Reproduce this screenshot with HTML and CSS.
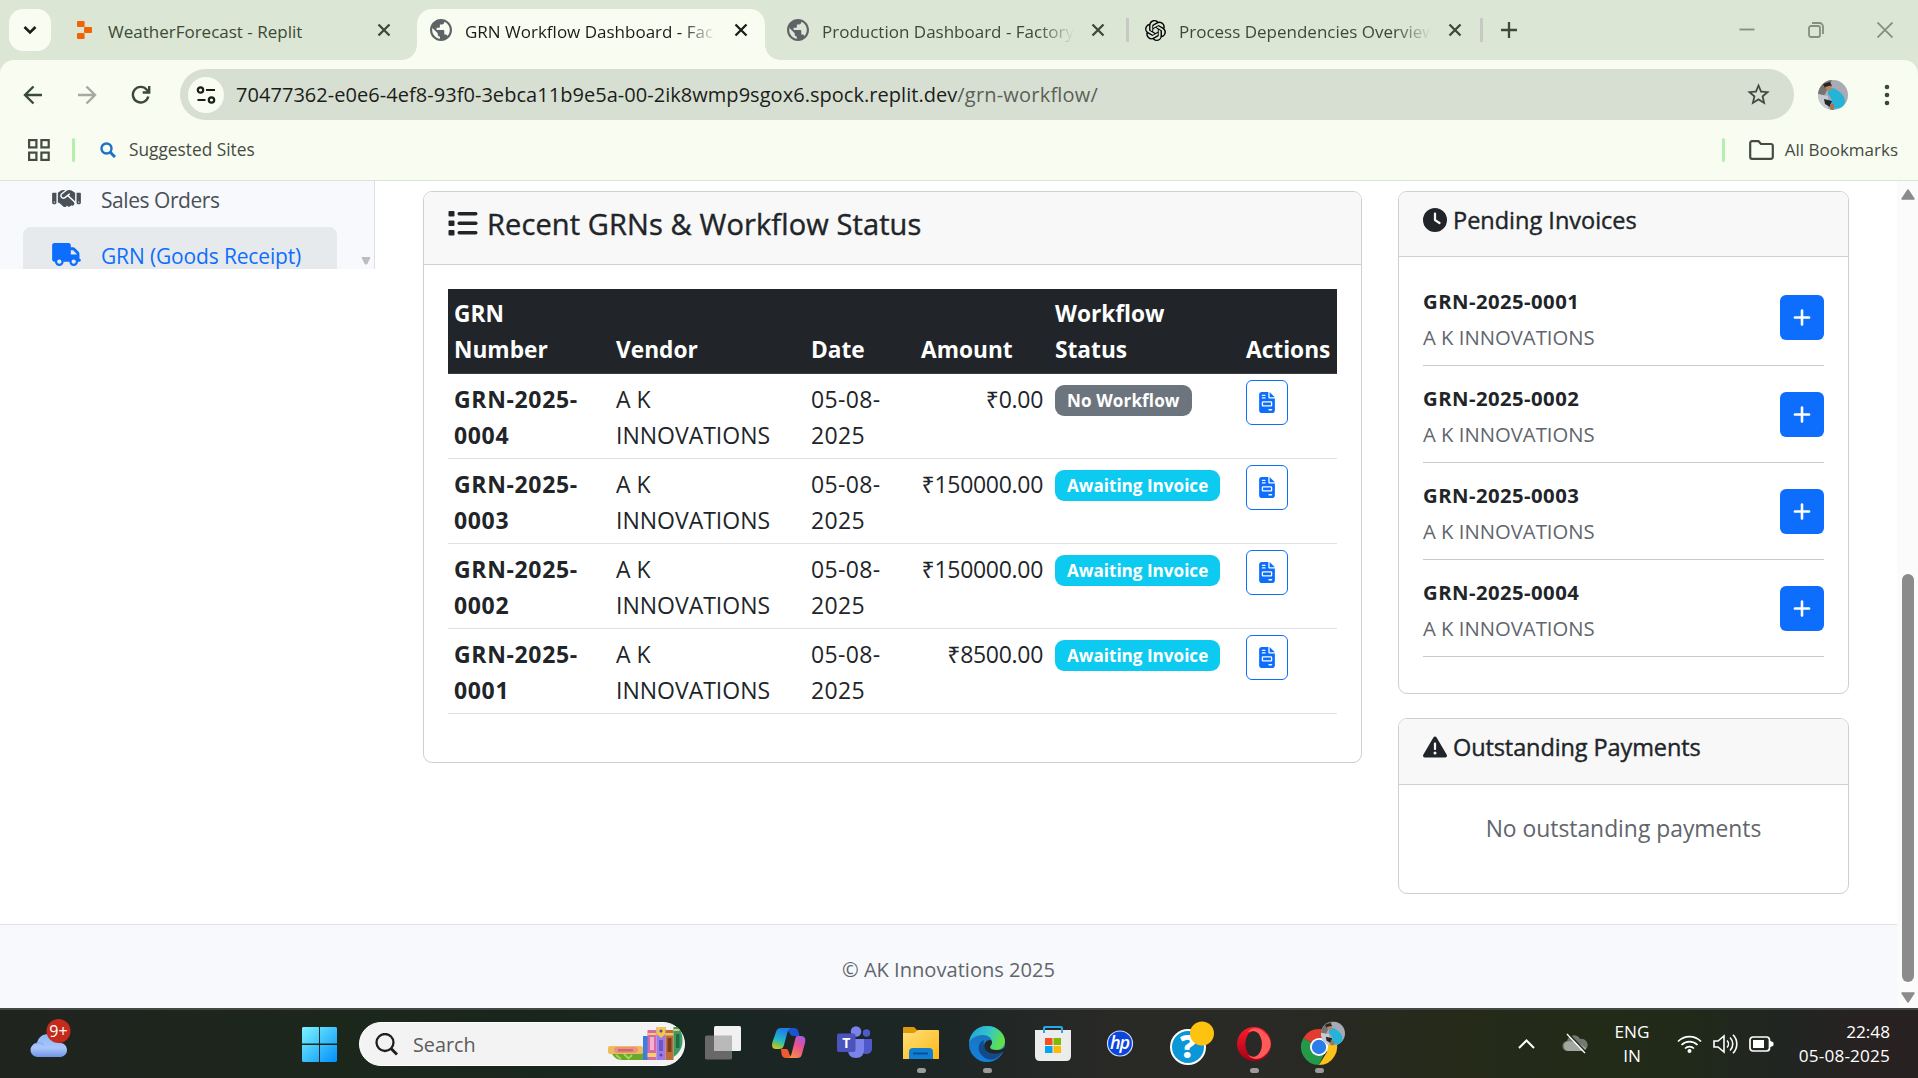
FILE: index.html
```html
<!DOCTYPE html>
<html lang="en">
<head>
<meta charset="utf-8">
<title>GRN Workflow Dashboard - Factory</title>
<link rel="stylesheet" href="styles.css">
</head>
<body>
<svg class="sprite" aria-hidden="true">
  <symbol id="i-globe" viewBox="2 2 20 20"><path d="M12 2C6.48 2 2 6.48 2 12s4.48 10 10 10 10-4.48 10-10S17.52 2 12 2zm-1 17.93c-3.95-.49-7-3.85-7-7.93 0-.62.08-1.21.21-1.79L9 15v1c0 1.1.9 2 2 2v1.93zm6.9-2.54c-.26-.81-1-1.39-1.9-1.39h-1v-3c0-.55-.45-1-1-1H8v-2h2c.55 0 1-.45 1-1V7h2c1.1 0 2-.9 2-2v-.41c2.93 1.19 5 4.06 5 7.41 0 2.08-.8 3.97-2.1 5.39z"/></symbol>
  <symbol id="i-close" viewBox="0 0 14 14"><path d="M1.5 1.5l11 11M12.5 1.5l-11 11" fill="none" stroke="currentColor" stroke-width="2.3"/></symbol>
  <symbol id="i-file" viewBox="0 0 384 512"><path d="M64 0C28.7 0 0 28.7 0 64V448c0 35.3 28.7 64 64 64H320c35.3 0 64-28.7 64-64V160H256c-17.7 0-32-14.3-32-32V0H64zM256 0V128H384L256 0zM80 64h64c8.8 0 16 7.2 16 16s-7.2 16-16 16H80c-8.8 0-16-7.2-16-16s7.2-16 16-16zm0 64h64c8.8 0 16 7.2 16 16s-7.2 16-16 16H80c-8.8 0-16-7.2-16-16s7.2-16 16-16zm16 96H288c17.7 0 32 14.3 32 32v64c0 17.7-14.3 32-32 32H96c-17.7 0-32-14.3-32-32V256c0-17.7 14.3-32 32-32zm0 32v64H288V256H96zM240 416h64c8.8 0 16 7.2 16 16s-7.2 16-16 16H240c-8.8 0-16-7.2-16-16s7.2-16 16-16z"/></symbol>
  <symbol id="i-plus" viewBox="0 0 448 512"><path d="M256 80c0-17.7-14.3-32-32-32s-32 14.3-32 32V224H48c-17.7 0-32 14.3-32 32s14.3 32 32 32H192V432c0 17.7 14.3 32 32 32s32-14.3 32-32V288H400c17.7 0 32-14.3 32-32s-14.3-32-32-32H256V80z"/></symbol>
  <symbol id="i-avatar" viewBox="0 0 30 30">
    <clipPath id="av"><circle cx="15" cy="15" r="15"/></clipPath>
    <g clip-path="url(#av)"><rect width="30" height="30" fill="#a8abb3"/><path d="M0 0h14L6 16 0 14z" fill="#77736f"/><path d="M0 14l10 2v14H0z" fill="#c6cad2"/><path d="M6 19l8 2-2 6-5-3z" fill="#25272c"/><path d="M10 9c3-2 6-1 9 1 5 3 8 7 8 12 0 3-2 5-5 6l-8 1 0-9-4-6z" fill="#25b4d8"/><path d="M5 4l7-2 2 4-7 2z" fill="#2b2522"/><path d="M7 7l6-1.500 1 4.500-4 1z" fill="#b98566"/><path d="M12 24h4v6h-4z" fill="#a3735a"/></g>
  </symbol>
</svg>

<div class="screen">
  <header class="browser">
    <div class="tabstrip">
      <button class="tab-search"><svg width="14" height="10" viewBox="0 0 14 10"><path d="M1.5 2l5.500 5.500L12.500 2" fill="none" stroke="#1b1d19" stroke-width="2.6"/></svg></button>
      <div class="tab tab-first">
        <span class="fav"><svg width="15" height="18" viewBox="0 0 15 18" fill="#f26207"><rect width="7.600" height="6" rx="1"/><rect x="7" y="6" width="8" height="6" rx="1"/><rect y="12" width="7.600" height="6" rx="1"/></svg></span>
        <span class="tab-title">WeatherForecast - Replit</span>
        <svg class="tab-close"><use href="#i-close"/></svg>
      </div>
      <div class="tab tab-active">
        <span class="fav"><svg class="globe"><use href="#i-globe"/></svg></span>
        <span class="tab-title fade">GRN Workflow Dashboard - Fac</span>
        <svg class="tab-close"><use href="#i-close"/></svg>
      </div>
      <div class="tab tab-third">
        <span class="fav"><svg class="globe"><use href="#i-globe"/></svg></span>
        <span class="tab-title fade">Production Dashboard - Factory</span>
        <svg class="tab-close"><use href="#i-close"/></svg>
      </div>
      <div class="tab tab-fourth">
        <span class="fav"><svg width="21" height="21" viewBox="0 0 24 24"><path d="M22.2819 9.8211a5.9847 5.9847 0 0 0-.5157-4.9108 6.0462 6.0462 0 0 0-6.5098-2.9A6.0651 6.0651 0 0 0 4.9807 4.1818a5.9847 5.9847 0 0 0-3.9977 2.9 6.0462 6.0462 0 0 0 .7427 7.0966 5.98 5.98 0 0 0 .511 4.9107 6.051 6.051 0 0 0 6.5146 2.9001A5.9847 5.9847 0 0 0 13.2599 24a6.0557 6.0557 0 0 0 5.7718-4.2058 5.9894 5.9894 0 0 0 3.9977-2.9001 6.0557 6.0557 0 0 0-.7475-7.0729zm-9.022 12.6081a4.4755 4.4755 0 0 1-2.8764-1.0408l.1419-.0804 4.7783-2.7582a.7948.7948 0 0 0 .3927-.6813v-6.7369l2.02 1.1686a.071.071 0 0 1 .038.052v5.5826a4.504 4.504 0 0 1-4.4945 4.4944zm-9.6607-4.1254a4.4708 4.4708 0 0 1-.5346-3.0137l.142.0852 4.783 2.7582a.7712.7712 0 0 0 .7806 0l5.8428-3.3685v2.3324a.0804.0804 0 0 1-.0332.0615L9.74 19.9502a4.4992 4.4992 0 0 1-6.1408-1.6464zM2.3408 7.8956a4.485 4.485 0 0 1 2.3655-1.9728V11.6a.7664.7664 0 0 0 .3879.6765l5.8144 3.3543-2.0201 1.1685a.0757.0757 0 0 1-.071 0l-4.8303-2.7865A4.504 4.504 0 0 1 2.3408 7.872zm16.5963 3.8558L13.1038 8.364 15.1192 7.2a.0757.0757 0 0 1 .071 0l4.8303 2.7913a4.4944 4.4944 0 0 1-.6765 8.1042v-5.6772a.79.79 0 0 0-.407-.667zm2.0107-3.0231l-.142-.0852-4.7735-2.7818a.7759.7759 0 0 0-.7854 0L9.409 9.2297V6.8974a.0662.0662 0 0 1 .0284-.0615l4.8303-2.7866a4.4992 4.4992 0 0 1 6.6802 4.66zM8.3065 12.863l-2.02-1.1638a.0804.0804 0 0 1-.038-.0567V6.0742a4.4992 4.4992 0 0 1 7.3757-3.4537l-.142.0805L8.704 5.459a.7948.7948 0 0 0-.3927.6813zm1.0976-2.3654l2.602-1.4998 2.6069 1.4998v2.9994l-2.5974 1.4997-2.6067-1.4997Z"/></svg></span>
        <span class="tab-title fade">Process Dependencies Overview</span>
        <svg class="tab-close"><use href="#i-close"/></svg>
      </div>
      <svg class="newtab" width="16" height="16" viewBox="0 0 16 16"><path d="M8 0v16M0 8h16" stroke="#3c4a38" stroke-width="2.300"/></svg>
      <div class="winctl">
        <svg width="16" height="16" viewBox="0 0 16 16"><path d="M.5 7.500h15"/></svg>
        <svg width="16" height="16" viewBox="0 0 16 16"><rect x="1" y="4" width="11" height="11" rx="2"/><path d="M4 1h7.500a3.500 3.500 0 0 1 3.500 3.500V12"/></svg>
        <svg width="16" height="16" viewBox="0 0 16 16"><path d="M.5.5l15 15M15.500.5l-15 15"/></svg>
      </div>
    </div>

    <div class="toolbar">
      <svg class="nav" width="20" height="20" viewBox="0 0 20 20"><path d="M19 10H2.500M10.500 1.500L2 10l8.500 8.500" stroke="#3a4a38"/></svg>
      <svg class="nav" width="20" height="20" viewBox="0 0 20 20"><path d="M1 10h16.500M9.500 1.500L18 10l-8.500 8.500" stroke="#a5aaa0"/></svg>
      <svg class="nav" width="20" height="20" viewBox="0 0 20 20"><path d="M17.300 11.500A7.800 7.800 0 1 1 15.800 4.800L18 7M18.200 1v6.500h-6.500" stroke="#3a4a38"/></svg>
      <div class="omnibox">
        <span class="site-info"><svg width="20" height="20" viewBox="0 0 20 20" fill="none" stroke="#1b1d19" stroke-width="2.200"><circle cx="4.500" cy="5" r="2.700"/><path d="M10 5h9M1.500 15h8"/><circle cx="15.500" cy="15" r="2.700"/></svg></span>
        <span class="url">70477362-e0e6-4ef8-93f0-3ebca11b9e5a-00-2ik8wmp9sgox6.spock.replit.dev<span class="path">/grn-workflow/</span></span>
        <svg class="star" width="27" height="27" viewBox="0 0 24 24" fill="#454b42"><path d="M22 9.240l-7.190-.62L12 2 9.190 8.630 2 9.240l5.460 4.730L5.820 21 12 17.270 18.180 21l-1.630-7.030L22 9.240zM12 15.400l-3.760 2.270 1-4.280-3.320-2.880 4.380-.38L12 6.100l1.710 4.040 4.380.38-3.320 2.880 1 4.280L12 15.400z"/></svg>
      </div>
      <svg class="profile" width="30" height="30"><use href="#i-avatar"/></svg>
      <svg class="menu" width="6" height="22" viewBox="0 0 6 22" fill="#3a4a38"><circle cx="3" cy="3" r="2.300"/><circle cx="3" cy="11" r="2.300"/><circle cx="3" cy="19" r="2.300"/></svg>
    </div>

    <div class="bookmarks">
      <svg class="apps" width="22" height="22" viewBox="0 0 22 22" fill="none" stroke="#454b42" stroke-width="2.200"><rect x="1.100" y="1.100" width="7.300" height="7.300"/><rect x="13.400" y="1.100" width="7.300" height="7.300"/><rect x="1.100" y="13.600" width="7.300" height="7.300"/><rect x="13.400" y="13.600" width="7.300" height="7.300"/></svg>
      <i class="bm-sep"></i>
      <svg class="bm-search" width="16" height="16" viewBox="0 0 16 16" fill="none" stroke="#1b73c8"><circle cx="6.500" cy="6.500" r="5" stroke-width="2.400"/><path d="M10 10l5 5" stroke-width="3"/></svg>
      <span class="bm-text suggested">Suggested Sites</span>
      <i class="bm-sep bm-right"></i>
      <svg class="folder" width="25" height="20" viewBox="0 0 25 20"><path d="M3 1.200h6.500l2.500 2.800h10a1.800 1.800 0 0 1 1.800 1.800V17a1.800 1.800 0 0 1-1.800 1.800H3A1.800 1.800 0 0 1 1.200 17V3A1.800 1.800 0 0 1 3 1.200z" fill="none" stroke="#454b42" stroke-width="2.200"/></svg>
      <span class="bm-text allbm">All Bookmarks</span>
    </div>
  </header>

  <div class="viewport">
    <div class="page">
      <div class="content">
        <aside class="sidebar">
          <nav>
            <a class="side-link"><svg width="29" height="23" viewBox="0 0 640 512"><path d="M323.400 85.200l-96.800 78.400c-16.100 13-19.200 36.400-7 53.100c12.900 17.800 38 21.300 55.300 7.800l99.300-77.200c7-5.400 17-4.200 22.500 2.800s4.200 17-2.800 22.500l-20.900 16.200L512 316.800V128h-.7l-3.900-2.500L434.800 79c-15.300-9.800-33.200-15-51.400-15c-21.800 0-43 7.500-60 21.200zm22.800 124.400l-51.700 40.200C263 274.300 217.300 268 193.700 235.600c-22.200-30.500-16.600-73.100 12.700-96.800l83.200-67.300c-11.600-4.900-24.100-7.400-36.800-7.400C234 64 215.700 69.600 200 80l-72 48V352h28.200l91.400 83.400c19.600 17.900 49.900 16.500 67.800-3.100c5.500-6.100 9.200-13.200 11.100-20.600l17 15.600c19.500 17.900 49.900 16.600 67.800-2.900c4.500-4.900 7.800-10.600 9.900-16.500c19.400 13 45.800 10.300 62.100-7.500c17.900-19.500 16.600-49.900-2.900-67.800l-134.200-123zM16 128c-8.800 0-16 7.200-16 16V352c0 17.700 14.300 32 32 32H64c17.700 0 32-14.300 32-32V128H16zM48 320a16 16 0 1 1 0 32 16 16 0 1 1 0-32zM544 128V352c0 17.700 14.300 32 32 32h32c17.700 0 32-14.300 32-32V144c0-8.800-7.200-16-16-16H544zm32 208a16 16 0 1 1 32 0 16 16 0 1 1 -32 0z"/></svg><span class="t-sales">Sales Orders</span></a>
            <a class="side-link active"><svg width="29" height="23" viewBox="0 0 640 512"><path d="M48 0C21.500 0 0 21.500 0 48V368c0 26.500 21.500 48 48 48H64c0 53 43 96 96 96s96-43 96-96H384c0 53 43 96 96 96s96-43 96-96h32c17.700 0 32-14.300 32-32s-14.300-32-32-32V288 256 237.300c0-17-6.700-33.300-18.700-45.300L512 114.700c-12-12-28.300-18.700-45.300-18.700H416V48c0-26.500-21.500-48-48-48H48zM416 160h50.700L544 237.300V256H416V160zM112 416a48 48 0 1 1 96 0 48 48 0 1 1 -96 0zm368-48a48 48 0 1 1 0 96 48 48 0 1 1 0-96z"/></svg><span class="t-grn">GRN (Goods Receipt)</span></a>
          </nav>
          <svg class="side-arrow" width="10" height="8" viewBox="0 0 10 8"><path d="M1 .5h8L5.800 7H4.200z" fill="#bdbdbd" stroke="#bdbdbd"/></svg>
        </aside>

        <main class="card recent">
          <div class="card-head big">
            <svg width="30" height="25" viewBox="0 0 30 25"><rect x=".5" y="0" width="6" height="5.500" rx="1"/><rect x=".5" y="9.500" width="6" height="5.500" rx="1"/><rect x=".5" y="19" width="6" height="5.500" rx="1"/><rect x="9.500" y="1" width="20" height="3.500" rx="1.700"/><rect x="9.500" y="10.500" width="20" height="3.500" rx="1.700"/><rect x="9.500" y="20" width="20" height="3.500" rx="1.700"/></svg>
            <h5>Recent GRNs &amp; Workflow Status</h5>
          </div>
          <div class="card-body">
            <table>
              <colgroup><col class="c1"><col class="c2"><col class="c3"><col class="c4"><col class="c5"><col class="c6"></colgroup>
              <thead><tr><th>GRN<br>Number</th><th>Vendor</th><th>Date</th><th>Amount</th><th>Workflow<br>Status</th><th>Actions</th></tr></thead>
              <tbody>
                <tr><td><strong>GRN-2025-<br>0004</strong></td><td>A K<br>INNOVATIONS</td><td class="date">05-08-<br>2025</td><td class="num">₹0.00</td><td><span class="badge none">No Workflow</span></td><td><a class="btn outline"><svg><use href="#i-file"/></svg></a></td></tr>
                <tr><td><strong>GRN-2025-<br>0003</strong></td><td>A K<br>INNOVATIONS</td><td class="date">05-08-<br>2025</td><td class="num">₹150000.00</td><td><span class="badge wait">Awaiting Invoice</span></td><td><a class="btn outline"><svg><use href="#i-file"/></svg></a></td></tr>
                <tr><td><strong>GRN-2025-<br>0002</strong></td><td>A K<br>INNOVATIONS</td><td class="date">05-08-<br>2025</td><td class="num">₹150000.00</td><td><span class="badge wait">Awaiting Invoice</span></td><td><a class="btn outline"><svg><use href="#i-file"/></svg></a></td></tr>
                <tr><td><strong>GRN-2025-<br>0001</strong></td><td>A K<br>INNOVATIONS</td><td class="date">05-08-<br>2025</td><td class="num">₹8500.00</td><td><span class="badge wait">Awaiting Invoice</span></td><td><a class="btn outline"><svg><use href="#i-file"/></svg></a></td></tr>
              </tbody>
            </table>
          </div>
        </main>

        <section class="side-cards">
          <div class="card pending">
            <div class="card-head">
              <svg width="24" height="24" viewBox="0 0 512 512"><path d="M256 0a256 256 0 1 1 0 512A256 256 0 1 1 256 0zM232 120V256c0 8 4 15.500 10.700 20l96 64c11 7.400 25.900 4.400 33.300-6.700s4.400-25.900-6.700-33.300L280 243.200V120c0-13.300-10.700-24-24-24s-24 10.700-24 24z"/></svg>
              <h6 class="t-pend">Pending Invoices</h6>
            </div>
            <ul class="invoices">
              <li><div><strong>GRN-2025-0001</strong><small>A K INNOVATIONS</small></div><a class="btn solid"><svg><use href="#i-plus"/></svg></a></li>
              <li><div><strong>GRN-2025-0002</strong><small>A K INNOVATIONS</small></div><a class="btn solid"><svg><use href="#i-plus"/></svg></a></li>
              <li><div><strong>GRN-2025-0003</strong><small>A K INNOVATIONS</small></div><a class="btn solid"><svg><use href="#i-plus"/></svg></a></li>
              <li><div><strong>GRN-2025-0004</strong><small>A K INNOVATIONS</small></div><a class="btn solid"><svg><use href="#i-plus"/></svg></a></li>
            </ul>
          </div>
          <div class="card payments">
            <div class="card-head">
              <svg width="24" height="24" viewBox="0 0 512 512"><path d="M256 32c14.200 0 27.300 7.500 34.500 19.800l216 368c7.300 12.400 7.300 27.700 .2 40.100S486.300 480 472 480H40c-14.300 0-27.600-7.700-34.700-20.100s-7-27.800 .2-40.100l216-368C228.700 39.500 241.800 32 256 32zm0 128c-13.300 0-24 10.700-24 24V296c0 13.300 10.700 24 24 24s24-10.700 24-24V184c0-13.300-10.700-24-24-24zm32 224a32 32 0 1 0-64 0 32 32 0 1 0 64 0z"/></svg>
              <h6 class="t-out">Outstanding Payments</h6>
            </div>
            <p class="empty">No outstanding payments</p>
          </div>
        </section>
      </div>
      <footer class="footer"><span>© AK Innovations 2025</span></footer>
    </div>
    <div class="scrollbar">
      <svg width="14" height="11" viewBox="0 0 14 11"><path d="M7 1L13 10H1z" fill="#8b8b8b" stroke="#8b8b8b" stroke-width="1.500" stroke-linejoin="round"/></svg>
      <i class="thumb"></i>
      <svg width="14" height="11" viewBox="0 0 14 11"><path d="M7 10L13 1H1z" fill="#8b8b8b" stroke="#8b8b8b" stroke-width="1.500" stroke-linejoin="round"/></svg>
    </div>
  </div>

  <div class="taskbar">
    <svg class="weather" width="44" height="44" viewBox="0 0 44 44">
      <defs><linearGradient id="cl" x1="0" y1="0" x2="0" y2="1"><stop offset="0" stop-color="#8fb4f3"/><stop offset=".6" stop-color="#a9c6fa"/><stop offset="1" stop-color="#6f95e6"/></linearGradient></defs>
      <path d="M9 38a7 7 0 0 1-1-14c1-5 5-9 11-9 6 0 10 4 11 9a7 7 0 0 1 2 14z" fill="url(#cl)"/><path d="M4 26c4-3 8-3 11 0" fill="none" stroke="#7fa3ec"/>
      <circle cx="29.500" cy="12" r="12" fill="#c42b1c"/><text x="29.500" y="18" text-anchor="middle" class="badge-num">9+</text>
    </svg>
    <svg class="start" width="35" height="35" viewBox="0 0 35 35"><defs><linearGradient id="win" gradientUnits="userSpaceOnUse" x1="0" y1="0" x2="35" y2="35"><stop offset="0" stop-color="#7df4ff"/><stop offset="1" stop-color="#0090fa"/></linearGradient></defs><path d="M1 0h16v16.500H0V1zM18 0h16l1 1v15.500H18zM0 18h17v17H1l-1-1zM18 18h17v16l-1 1H18z" fill="url(#win)"/></svg>
    <div class="searchbox">
      <svg width="23" height="23" viewBox="0 0 23 23" fill="none" stroke="#1f1f1f" stroke-width="2.300"><circle cx="10" cy="9.500" r="8.500"/><path d="M16 15.500l6 6" stroke-width="3"/></svg>
      <span>Search</span>
      <svg class="books" width="76" height="34" viewBox="0 0 76 34">
        <path d="M4 26h32v7H14c-5 0-8-3-10-6z" fill="#6aa82c"/><path d="M8 28l5 4M16 27l5 5M24 28l-4 4" stroke="#a4d64e" stroke-width="2"/>
        <rect x="0" y="19" width="35" height="8" rx="2" fill="#eebc5e"/><rect x="6" y="20" width="24" height="6" rx="3" fill="#ee8f86"/><rect x="10" y="22" width="15" height="2.500" fill="#c96b64"/>
        <rect x="35" y="9" width="5" height="24" fill="#3b7de0"/><rect x="39.500" y="3" width="9" height="30" fill="#d76aa5"/><rect x="39.500" y="6" width="9" height="2" fill="#f4d06a"/><rect x="39.500" y="26" width="9" height="4" fill="#f4d06a"/><rect x="42" y="10" width="4" height="13" fill="#f2b1d2"/>
        <rect x="48.500" y="0" width="9" height="33" fill="#9a7be8"/><path d="M48.500 0h9v7L53 11l-4.500-4z" fill="#f1c64b"/><circle cx="53" cy="4" r="1.500" fill="#5c48ad"/><rect x="51" y="13" width="4" height="11" fill="#6e56c2"/><circle cx="53" cy="28" r="1.600" fill="#5c48ad"/>
        <rect x="57.500" y="3" width="8" height="30" fill="#c26a33"/><rect x="57.500" y="6" width="8" height="2.500" fill="#f0c46a"/><rect x="59.500" y="11" width="4" height="14" fill="#7d3d1c"/>
        <path d="M65.500 0h4c4 4 5 8 5 14s-3 12-9 16z" fill="#3d9a63"/><path d="M65.500 3h6" stroke="#f0c46a" stroke-width="2"/><rect x="68" y="7" width="3.500" height="14" fill="#246b42"/>
      </svg>
    </div>
    <div class="apps-row">
      <span class="app"><svg width="36" height="36" viewBox="0 0 36 36"><rect x="0" y="9.500" width="27" height="24" rx="1.500" fill="#686868"/><rect x="9" y="0" width="27" height="25" rx="1.500" fill="#f1f1f1"/><path d="M9 9.500h18V25H9z" fill="#b9b9b9"/></svg></span>
      <span class="app"><svg width="36" height="36" viewBox="0 0 36 36"><defs><linearGradient id="ca" x1=".3" y1="0" x2="0" y2="1"><stop offset="0" stop-color="#1d7fe8"/><stop offset=".5" stop-color="#21b8c8"/><stop offset=".75" stop-color="#7cc653"/><stop offset="1" stop-color="#f5c518"/></linearGradient><linearGradient id="cb" x1="1" y1="0" x2=".4" y2="1"><stop offset="0" stop-color="#9a5cf5"/><stop offset=".5" stop-color="#e9508f"/><stop offset="1" stop-color="#f88a4a"/></linearGradient></defs>
        <path d="M15 2h8c2.500 0 4 1.500 4.500 4l1 4h-6c-2 0-3-1-4-3z" fill="#1b54d2"/><path d="M10 23l5 0c2 0 2 1 3 4s2 5 5 5H15c-3 0-4-2-4.500-4z" fill="#f2592f"/>
        <path d="M10 2h11c-3 0-4 2-5 6l-3 11c-1 3-2 4-5 4H5c-4 0-4.500-3-3.500-7L5 6c1-3 2-4 5-4z" fill="url(#ca)"/><path d="M26 10h4c4 0 5 3 4 7l-3 11c-1 3-2 4-5 4H16c3 0 4-2 5-6l3-12c.5-2 .5-3 2-4z" fill="url(#cb)"/></svg></span>
      <span class="app"><svg width="36" height="36" viewBox="0 0 36 36"><circle cx="29.500" cy="7" r="3.700" fill="#5059c9"/><path d="M25 13h10v10c0 3-3 5-6 5s-4-2-4-4z" fill="#5059c9"/><circle cx="19" cy="5.500" r="5.300" fill="#7b83eb"/><path d="M11 13h16v11c0 5-3 8-8 8s-8-3-8-8z" fill="#7b83eb"/><rect x="0" y="7.500" width="18.500" height="18.500" rx="2" fill="#4b53bc"/><text x="9.200" y="21.500" text-anchor="middle" class="teams-t">T</text></svg></span>
      <span class="app run"><svg width="36" height="36" viewBox="0 0 36 36"><defs><linearGradient id="fo" x1="0" y1="0" x2="1" y2="1"><stop offset="0" stop-color="#ffe07a"/><stop offset="1" stop-color="#fcb814"/></linearGradient></defs><path d="M0 2q0-1 1-1h10l4 4v6H0z" fill="#dc9a0b"/><path d="M0 7h11l4-3h20q1 0 1 1v28H0z" fill="url(#fo)"/><path d="M6 33v-7q0-4 4-4h16q4 0 4 4v7z" fill="#0f7fd4"/><path d="M10 27.500h15" stroke="#0b4e8f" stroke-width="2"/></svg></span>
      <span class="app run"><svg width="36" height="36" viewBox="0 0 36 36"><defs><linearGradient id="ea" x1="0" y1="0" x2="1" y2=".3"><stop offset="0" stop-color="#1e9de0"/><stop offset=".6" stop-color="#34c7c5"/><stop offset="1" stop-color="#62e04a"/></linearGradient><linearGradient id="eb" x1="0" y1="0" x2="0" y2="1"><stop offset="0" stop-color="#1c6fb5"/><stop offset="1" stop-color="#1283e0"/></linearGradient></defs><circle cx="18" cy="18" r="18" fill="url(#eb)"/><path d="M0 17C1 7 8 0 18 0c11 0 18 8 18 15 0 6-4 9-9 9-4 0-6-1-6-3 0-1 2-2 2-5 0-4-4-7-9-7C8 9 2 12 0 17z" fill="url(#ea)"/><path d="M15 14c-5 2-7 8-4 13s11 10 18 4c2-2 4-3 4.500-4.500-5 2-15 1-18-5-1.200-3-1-5-.5-7.500z" fill="#134a8c"/><path d="M20 14c-4 1-6 5-4 9 3 5 11 6 17 3.500 1-.5 1.500-.5 1 .8L36 24v-3c-3 3-6 3-9 3-4 0-6-1-6-3 0-1 2-2 2-5 0-1-1-2.500-3-2z" fill="#222725"/></svg></span>
      <span class="app"><svg width="36" height="36" viewBox="0 0 36 36"><path d="M9 7V2.500Q9 1 10.500 1h15Q27 1 27 2.500V7" fill="none" stroke="#27a7ea" stroke-width="2.200"/><path d="M0 4h36v26q0 5-5 5H5q-5 0-5-5z" fill="#ececec"/><path d="M9 4v3M27 4v3" stroke="#27a7ea" stroke-width="2"/><path d="M10 12h7.500v7H10z" fill="#f25022"/><path d="M18.500 12H26v7h-7.500z" fill="#7fba00"/><path d="M10 20h7.500v7H10z" fill="#00a4ef"/><path d="M18.500 20H26v7h-7.500z" fill="#ffb900"/></svg></span>
      <span class="app hp"><svg width="36" height="36" viewBox="0 0 36 36"><circle cx="18" cy="17.500" r="12.500" fill="#0b45e0" stroke="#d5dcf5" stroke-width="1.200"/><text x="17.500" y="22.500" text-anchor="middle" class="hp-t">hp</text></svg></span>
      <span class="app help"><svg width="52" height="46" viewBox="0 0 52 46"><circle cx="26" cy="26" r="17" fill="#0a96d7" stroke="#fff" stroke-width="2"/><text x="26" y="37" text-anchor="middle" class="help-t">?</text><circle cx="40" cy="12.500" r="12" fill="#ffc20e"/></svg></span>
      <span class="app run"><svg width="36" height="36" viewBox="0 0 36 36"><defs><linearGradient id="op" x1="0" y1="0" x2="0" y2="1"><stop offset="0" stop-color="#ff1b2d"/><stop offset="1" stop-color="#a70014"/></linearGradient></defs><circle cx="18" cy="18" r="17" fill="url(#op)"/><path d="M12 6c4-6 12-4 16 0 9 7 9 17 0 24-5 4-12 4-16-1 8 4 14-2 14-11S20 3 12 6z" fill="#ff5a5a"/><ellipse cx="17.500" cy="18" rx="8.200" ry="12.800" fill="#292927"/></svg></span>
      <span class="app run chrome"><svg width="52" height="46" viewBox="0 0 52 46"><path d="M26 26L10.400 17A18 18 0 0 1 41.600 17z" fill="#e33b2e"/><path d="M10.400 17L26 26l6 5-6 13A18 18 0 0 1 10.400 17z" fill="#24994a"/><path d="M26 17h15.600A18 18 0 0 1 26 44l8-13z" fill="#fcc31b"/><circle cx="26" cy="26" r="9" fill="#fff"/><circle cx="26" cy="26" r="7.200" fill="#2b7de9"/><svg x="28" y="0" width="24" height="25" viewBox="0 0 30 30"><use href="#i-avatar"/></svg></svg></span>
    </div>
    <div class="tray">
      <svg class="chev" width="17" height="10" viewBox="0 0 17 10"><path d="M1 9l7.500-7.500L16 9" fill="none" stroke="#fff" stroke-width="2"/></svg>
      <svg class="drive" width="26" height="22" viewBox="0 0 26 22"><path d="M6 18a5 5 0 0 1-1-10 7 7 0 0 1 13-2 6 6 0 0 1 3 12z" fill="#747871"/><path d="M4 9c6-2 12 1 20 6-1 2-2 3-4 3H6a5 5 0 0 1-2-9z" fill="#a3a6a1"/><path d="M5 1l18 19" stroke="#fff" stroke-width="1.500"/><path d="M7 1l18 19" stroke="#232a1a" stroke-width="1.200"/></svg>
      <div class="lang"><span>ENG</span><span>IN</span></div>
      <svg class="wifi" width="25" height="20" viewBox="0 0 25 20" fill="none" stroke="#fff" stroke-width="1.700"><path d="M1 7.500a16 16 0 0 1 23 0M4.500 11a11.300 11.300 0 0 1 16 0M8 14.500a6.400 6.400 0 0 1 9 0"/><circle cx="12.500" cy="17" r="2" fill="#fff" stroke="none"/></svg>
      <svg class="sound" width="25" height="20" viewBox="0 0 25 20" fill="none" stroke="#fff" stroke-width="1.600"><path d="M1 7v6h4l6 5V2L5 7z"/><path d="M14 6.500a5 5 0 0 1 0 7M17 3.500a9 9 0 0 1 0 13M20 .8a13 13 0 0 1 0 18.400"/></svg>
      <svg class="batt" width="25" height="16" viewBox="0 0 25 16"><rect x="1" y="1" width="19.500" height="14" rx="3" fill="none" stroke="#fff" stroke-width="1.700"/><rect x="4" y="4" width="11" height="8" fill="#fff"/><path d="M21 5.500l3 1v3l-3 1z" fill="#fff" stroke="#fff"/></svg>
      <div class="clock"><span class="t-time">22:48</span><span class="t-date">05-08-2025</span></div>
    </div>
  </div>
</div>
</body>
</html>
```
FILE: styles.css
```css
* { box-sizing: border-box; }
body { margin: 0; font-family: "Open Sans", "Noto Sans", sans-serif; color: #212529; overflow: hidden; }
svg { flex: none; display: block; }
.sprite { position: absolute; width: 0; height: 0; }
.screen { width: 1918px; height: 1078px; display: flex; flex-direction: column; background: #fff; }

/* browser chrome */
.browser { flex: none; background: #dbe6d4; }
.tabstrip { height: 60px; display: flex; align-items: center; padding-left: 9px; }
.tab-search { width: 42px; height: 42px; border: 0; border-radius: 14px; background: #f8fcf1; padding: 0; display: grid; place-items: center; }
.tab { height: 51px; margin-top: 9px; padding-bottom: 9px; display: flex; align-items: center; color: #3c4a38; flex: none; }
.tab-first { width: 366px; padding-left: 22px; padding-right: 26px; }
.tab-active { width: 348px; padding-left: 13px; padding-right: 17px; background: #f8fcf1; color: #1b1d19; border-radius: 15px 15px 0 0; position: relative; }
.tab-active::before, .tab-active::after { content: ""; position: absolute; bottom: 0; width: 15px; height: 15px; }
.tab-active::before { left: -15px; background: radial-gradient(circle at 0 0, transparent 14.500px, #f8fcf1 15px); }
.tab-active::after { right: -15px; background: radial-gradient(circle at 100% 0, transparent 14.500px, #f8fcf1 15px); }
.tab-third { width: 361px; padding-left: 22px; padding-right: 21px; }
.tab-fourth { width: 357px; padding-left: 18px; padding-right: 21px; background: linear-gradient(#c8c9c2, #c8c9c2) 0 9px / 3px 24px no-repeat, linear-gradient(#c8c9c2, #c8c9c2) 100% 9px / 3px 24px no-repeat; }
.fav { width: 22px; display: grid; place-items: center; margin-right: 13px; flex: none; }
.globe { width: 22px; height: 22px; fill: #5f6368; }
.tab-title { flex: 1; white-space: nowrap; overflow: hidden; font-size: 17px; line-height: 26px; margin-right: 15px; padding-top: 4px; }
.fade { -webkit-mask-image: linear-gradient(90deg, #000 calc(100% - 38px), transparent calc(100% - 2px)); mask-image: linear-gradient(90deg, #000 calc(100% - 38px), transparent calc(100% - 2px)); }
.tab-close { width: 14px; height: 14px; }
.newtab { margin-left: 18px; }
.winctl { margin-left: auto; display: flex; gap: 53px; padding-right: 25px; fill: none; stroke: #84907f; stroke-width: 1.800; }

.toolbar { height: 60px; background: #f8fcf1; border-radius: 14px 14px 0 0; padding-top: 9px; display: flex; align-items: center; padding-left: 23px; }
.nav { margin-right: 34px; fill: none; stroke-width: 2.400; }
.nav + .nav + .nav { margin-right: 29px; }
.omnibox { width: 1614px; height: 51px; border-radius: 26px; background: #d7dfd3; display: flex; align-items: center; padding: 0 22px 0 8px; }
.site-info { width: 36px; height: 36px; border-radius: 50%; background: #f8fcf1; display: grid; place-items: center; margin-right: 12px; }
.url { flex: 1; font-size: 20px; letter-spacing: .04px; color: #1b1d19; white-space: nowrap; }
.path { color: #5a6156; letter-spacing: .2px; }
.profile { margin-left: 24px; }
.menu { margin-left: 36px; }
.bookmarks { height: 61px; background: #f8fcf1; border-bottom: 1px solid #dbe6d4; display: flex; align-items: center; padding-left: 28px; color: #454b42; font-size: 17px; }
.bm-sep { width: 3px; height: 24px; border-radius: 2px; background: #b4f0ac; margin: 0 25px 0 22px; }
.bm-search { margin-right: 13px; }
.bm-text { padding-bottom: 2px; }
.suggested { font-size: 17.300px; }
.bm-right { margin: 0 24px 0 auto; }
.folder { margin-right: 11px; }
.allbm { margin-right: 20px; }

/* page */
.viewport { flex: 1; min-height: 0; display: flex; }
.page { flex: 1; display: flex; flex-direction: column; }
.content { flex: 1; display: flex; align-items: flex-start; }
.sidebar { width: 375px; height: 88px; background: #f8f9fc; border-right: 1px solid #dee2e6; overflow: hidden; display: flex; align-items: flex-end; }
.sidebar nav { width: 337px; height: 88px; padding-left: 23px; }
.side-link { height: 55px; margin-bottom: 1px; padding-left: 29px; display: flex; align-items: center; font-size: 21px; color: #495057; border-radius: 8px; }
.side-link:first-child { margin-top: -10px; }
.side-link svg { fill: currentColor; margin-right: 20px; }
.side-link span { padding-top: 2px; }
.t-sales { letter-spacing: -.45px; }
.t-grn { letter-spacing: -.15px; }
.side-link.active { background: #e7eaed; color: #0d6efd; }
.side-arrow { margin: 0 0 4px 24px; }

.card { background: #fff; border: 1px solid #cdcfd1; border-radius: 9px; overflow: hidden; }
.card-head { background: #f8f8f8; border-bottom: 1px solid #cdcfd1; height: 65px; padding: 0 24px 9px; display: flex; align-items: center; }
.card-head svg { fill: #212529; margin-right: 6px; }
.card-head.big { height: 73px; padding: 0 24px 10px; }
.card-head.big svg { margin-right: 9px; }
h5, h6 { margin: 0; font-weight: 500; white-space: nowrap; -webkit-text-stroke: .4px #212529; }
h5 { font-size: 29px; letter-spacing: .12px; }
h6 { font-size: 23.500px; }
.t-out { letter-spacing: -.1px; }
.recent { width: 939px; height: 572px; margin: 10px 0 0 48px; }
.card-body { padding: 24px; }
table { width: 889px; table-layout: fixed; border-collapse: separate; border-spacing: 0; font-size: 23px; line-height: 36px; white-space: nowrap; }
.c1 { width: 162px; } .c2 { width: 195px; } .c3 { width: 110px; } .c4 { width: 134px; } .c5 { width: 191px; } .c6 { width: 97px; }
th, td { padding: 7px 6px 5px; text-align: left; vertical-align: top; border-bottom: 1px solid #dee2e6; height: 85px; }
th { background: #212529; color: #fff; vertical-align: bottom; border-color: #373b3e; font-size: 22.700px; }
td strong { letter-spacing: .65px; }
.date { letter-spacing: .35px; }
.num { text-align: right; letter-spacing: -.3px; }
.badge { display: block; width: max-content; margin-top: 4px; height: 31px; line-height: 31px; border-radius: 9px; padding: 0 12px; color: #fff; font-weight: 700; font-size: 17.100px; }
.none { background: #6c757d; letter-spacing: .1px; }
.wait { background: #0dcaf0; }
.btn { display: grid; place-items: center; border-radius: 6px; height: 45px; }
.outline { width: 42px; margin-top: -1px; border: 1px solid #0d6efd; fill: #0d6efd; }
.outline svg { width: 16px; height: 21px; }
.solid { width: 44px; background: #0d6efd; fill: #fff; }
.solid svg { width: 18px; height: 21px; }

.side-cards { width: 451px; margin: 10px 0 0 36px; display: flex; flex-direction: column; gap: 24px; }
.pending { height: 503px; }
.invoices { list-style: none; margin: 0; padding: 12px 24px; }
.invoices li { height: 97px; border-bottom: 1px solid #c8cacc; display: flex; justify-content: space-between; align-items: center; }
.invoices div { display: flex; flex-direction: column; padding-top: 4px; }
.invoices strong, .invoices small { font-size: 20.300px; line-height: 36px; white-space: nowrap; }
.invoices strong { letter-spacing: .45px; }
.invoices small { color: #5f666c; }
.payments { height: 176px; }
.payments .card-head { height: 66px; }
.empty { margin: 26px 0 0; text-align: center; font-size: 22.850px; line-height: 36px; color: #5f666c; }
.footer { height: 84px; flex: none; border-top: 1px solid #dee2e6; background: #f8f9fc; display: flex; align-items: center; justify-content: center; padding-top: 5px; font-size: 20.100px; color: #5f666c; }
.scrollbar { width: 21px; background: #fbfbfb; display: flex; flex-direction: column; align-items: center; padding: 8px 0 5px; }
.thumb { width: 12px; height: 408px; border-radius: 6px; background: #8b8b8b; margin: auto 0 10px; }

/* taskbar */
.taskbar { flex: none; height: 70px; border-top: 2px solid #454845; display: flex; align-items: center; color: #fff; background: linear-gradient(90deg, #20241f 0, #1c271c 18%, #19261d 28%, #1b2625 42%, #1d2625 49%, #292926 58%, #292926 66%, #252a19 76%, #212a18 87%, #212522 93%, #272221 97%, #272221 100%); }
.weather { margin-left: 29px; margin-top: -6px; overflow: visible; }
.badge-num { font-size: 16px; fill: #fff; }
.start { margin-left: 229px; }
.searchbox { margin-left: 22px; width: 326px; height: 44px; border-radius: 22px; background: #f3f3f3; display: flex; align-items: center; padding-left: 15px; color: #5c5c5c; font-size: 19.800px; border: 1px solid #fff; }
.searchbox span { margin-left: 15px; }
.books { margin-left: auto; }
.apps-row { display: flex; margin-left: 5px; }
.app { width: 66px; height: 68px; display: grid; place-items: center; position: relative; }
.hp { width: 68px; }
.help { width: 67px; }
.chrome { width: 64px; }
.run::after { content: ""; position: absolute; bottom: 5px; left: calc(50% - 4px); width: 9px; height: 5px; border-radius: 3px; background: #9b9c9a; }
.teams-t { font-size: 14px; font-weight: 700; fill: #fff; }
.hp-t { font-size: 18px; font-style: italic; font-weight: 600; fill: #fff; letter-spacing: -1px; }
.help-t { font-size: 32px; font-weight: 800; fill: #fff; }
.tray { margin-left: auto; display: flex; align-items: center; padding-right: 28px; font-size: 17.200px; line-height: 24px; }
.chev { margin-right: 1px; }
.drive { margin-left: 26px; }
.lang { margin-left: 26px; width: 36px; display: flex; flex-direction: column; align-items: center; }
.wifi { margin-left: 27px; }
.sound { margin-left: 11px; }
.batt { margin-left: 11px; }
.clock { width: 116px; display: flex; flex-direction: column; align-items: flex-end; }
.t-date { letter-spacing: .15px; }
```
